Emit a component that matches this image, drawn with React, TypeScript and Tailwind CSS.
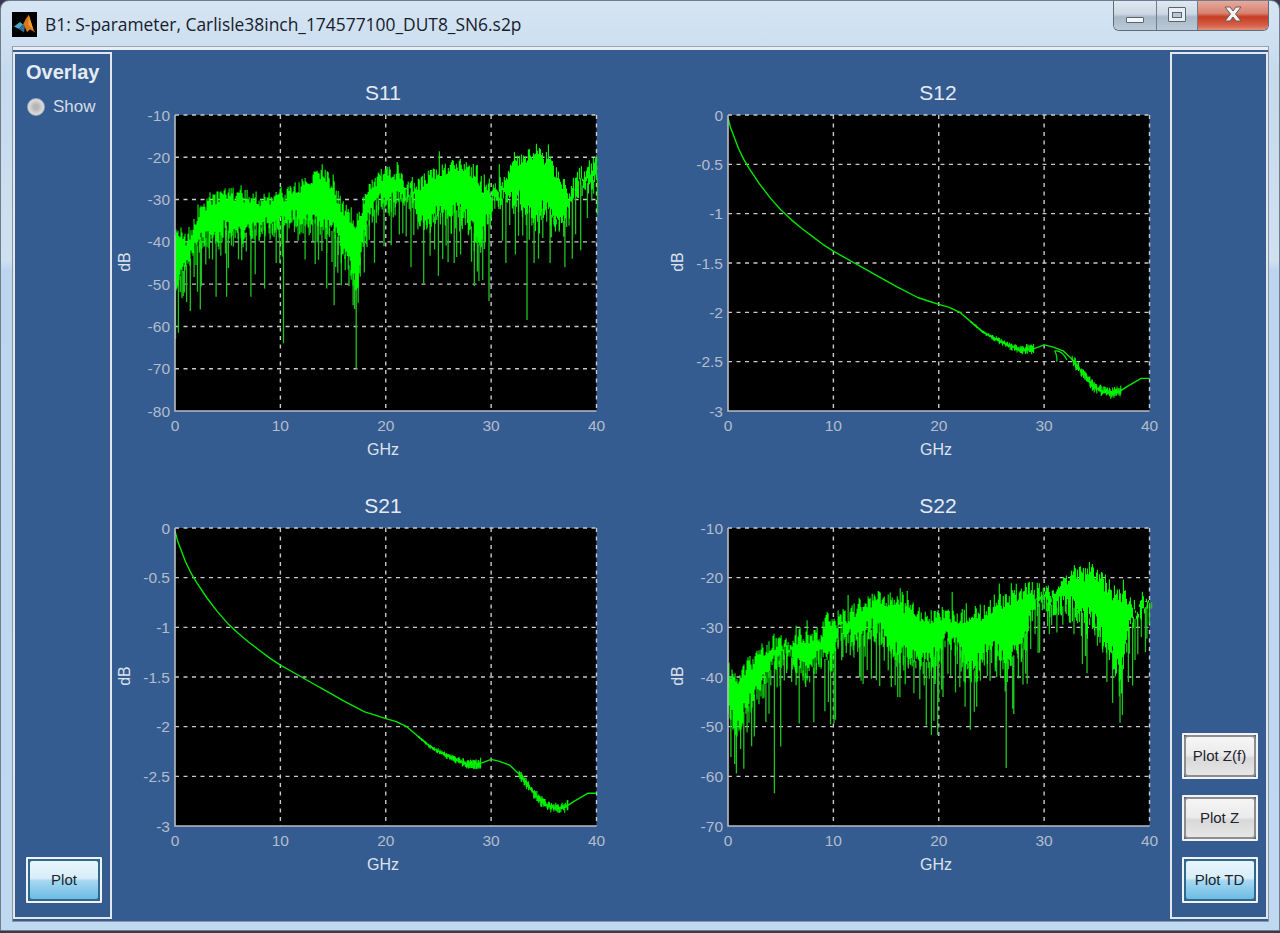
type Pt = [number, number];

// small seeded random so every render gives the same trace
const makeRand = (seed: number) => () => {
  seed = (seed + 0x6d2b79f5) | 0;
  let t = Math.imul(seed ^ (seed >>> 15), 1 | seed);
  t = (t + Math.imul(t ^ (t >>> 7), 61 | t)) ^ t;
  return ((t ^ (t >>> 14)) >>> 0) / 4294967296;
};

const interp = (pts: Pt[], x: number) => {
  for (let i = 1; i < pts.length; i++) {
    if (x <= pts[i][0]) {
      const [x0, y0] = pts[i - 1];
      const [x1, y1] = pts[i];
      return y0 + ((y1 - y0) * (x - x0)) / (x1 - x0);
    }
  }
  return pts[pts.length - 1][1];
};

const PLOT_W = 421.5;
const PLOT_LEFT = 53;
const PLOT_TOP = 40;

interface Noisy {
  top: Pt[];
  bottom: Pt[];
  spikes: Pt[];
  seed: number;
}

const s11: Noisy = {
  seed: 11,
  top: [[0, -38], [0.5, -37], [1, -39], [2, -35], [3, -30], [3.6, -29], [5, -28], [7, -29], [9, -29.5], [9.6, -27], [10.5, -28.5], [12, -26], [13.5, -23.2], [14.5, -24.5], [15.3, -28], [15.9, -31.5], [17.2, -35], [17.9, -30], [18.5, -27], [20, -22.8], [21.3, -23.7], [22.3, -27], [23, -26], [25.1, -22.8], [27, -21.2], [28.6, -23], [29.2, -26.4], [30.2, -27.7], [30.8, -26], [31.4, -25.5], [32.1, -20], [34.6, -18.8], [35.5, -20], [36.8, -26.4], [37.4, -28.3], [38.4, -23], [39.2, -23], [40, -19]],
  bottom: [[0, -50], [1, -46], [2.3, -40], [4.5, -37], [6.5, -38], [9, -36], [11.5, -34], [14, -35], [15.5, -39], [17.2, -50], [18, -37], [19.4, -30], [21, -30], [22.5, -29], [23.5, -36], [25.8, -32], [27.6, -33], [28.9, -41], [30.2, -29], [31.4, -30], [33, -30], [34, -34], [35, -32], [36.8, -36], [37.4, -30], [38.4, -27], [40, -25]],
  spikes: [[0.05, -63], [0.9, -52], [2.4, -56], [3.9, -53], [4.9, -53], [7.2, -53], [8.5, -51], [9.6, -45], [10.3, -64], [14.4, -51], [15.1, -55], [16.9, -55], [17.2, -70], [22.4, -46], [23.6, -50], [25, -48], [26.5, -45], [27.1, -43], [28.7, -47], [29.2, -49], [29.8, -54], [31.4, -45], [33.4, -58.5], [32.3, -43], [34.5, -44], [35.6, -45], [37, -46], [37.7, -44], [38.5, -42]],
};

const s22: Noisy = {
  seed: 22,
  top: [[0, -37.2], [0.6, -40], [2.4, -36], [4, -32.5], [5.6, -32.5], [7.1, -31], [8.7, -31], [9.4, -28], [10.3, -28.5], [11.9, -26], [13.5, -24], [15.1, -23.5], [16.7, -25], [18.2, -27], [20.8, -27.1], [23.9, -26.5], [25.8, -24.5], [28.3, -21.9], [29.9, -22.4], [31.2, -22.8], [32.4, -18.5], [34.9, -18.8], [36.8, -23], [38.1, -24], [38.7, -28], [39.7, -23], [40, -23]],
  bottom: [[0, -46], [0.8, -50], [1.5, -47], [2.7, -44], [3.9, -39], [5.6, -35], [7.7, -40], [8.7, -36], [10, -37], [10.6, -31], [12.5, -32], [14, -30], [15.9, -35], [18.1, -37], [19.2, -37], [20.8, -32], [22.3, -35], [23.3, -39], [24.9, -32.5], [26.4, -37], [28, -34], [28.6, -27], [29.9, -24.5], [31.2, -26], [32.4, -25.5], [34, -27.5], [35.2, -30], [36.1, -34], [37.3, -39], [38.1, -30], [38.7, -28], [40, -25]],
  spikes: [[0.8, -59.4], [1.3, -50], [2.5, -52], [4.4, -63.4], [5, -54], [10.2, -48.6], [12.5, -40], [15.5, -42], [16.1, -44], [18.2, -44.5], [19.3, -51.7], [19.9, -51.7], [20.4, -44], [22, -42], [22.5, -46], [23, -50.6], [23.6, -46], [25.5, -40], [26.4, -58.3], [28, -41.5], [35.3, -33], [36.5, -45.2], [37.2, -49.2], [38, -41]],
};

const buildNoisy = (n: Noisy, plotH: number, yMin: number, yMax: number) => {
  const rand = makeRand(n.seed);
  const px = (g: number) => (g / 40) * PLOT_W + PLOT_LEFT;
  const py = (d: number) => PLOT_TOP + ((yMax - d) / (yMax - yMin)) * plotH;
  let body = "";
  let thin = "";
  // one column per screen pixel, the reference trace is chunky and not a smooth band
  for (let g = 0; g <= 40; g += 0.095) {
    const t = interp(n.top, g) + (rand() - 0.65) * 3.6 + (rand() > 0.88 ? rand() * 3.5 : 0);
    const b = interp(n.bottom, g) + (rand() - 0.5) * 4.5 + (rand() > 0.7 ? -rand() * 4 : 0);
    body += `M${px(g).toFixed(1)} ${py(Math.min(t, yMax)).toFixed(1)}V${py(b).toFixed(1)}`;
  }
  for (let g = 0.1; g < 40; g += 0.3) {
    const gx = g + rand() * 0.25;
    const depth = Math.pow(rand(), 1.6) * 12 + 1;
    thin += `M${px(gx).toFixed(1)} ${py(interp(n.bottom, gx)).toFixed(1)}V${py(interp(n.bottom, gx) - depth).toFixed(1)}`;
  }
  n.spikes.forEach(([g, d]) => {
    thin += `M${px(g).toFixed(1)} ${py(interp(n.bottom, g) + 1).toFixed(1)}V${py(d).toFixed(1)}`;
  });
  return { body, thin };
};

const curve: Pt[] = [[0, -0.03], [0.25, -0.13], [0.5, -0.2], [1, -0.34], [1.5, -0.45], [2, -0.54], [3, -0.7], [4, -0.84], [5, -0.96], [6, -1.06], [7, -1.15], [8, -1.23], [9, -1.31], [10, -1.38], [11, -1.44], [12, -1.5], [13, -1.56], [14, -1.62], [16, -1.74], [18, -1.85], [19, -1.885], [20, -1.92], [21, -1.95], [22, -2], [24.2, -2.2], [26.1, -2.31], [27.7, -2.38], [29, -2.37], [30, -2.33], [30.8, -2.35], [31.8, -2.39], [32.6, -2.47], [33.4, -2.58], [34.7, -2.75], [35.5, -2.8], [36.3, -2.82], [37, -2.81], [37.9, -2.75], [39.2, -2.67], [40, -2.67]];

const buildCurve = (plotH: number, seed: number) => {
  const rand = makeRand(seed);
  const px = (g: number) => (g / 40) * PLOT_W + PLOT_LEFT;
  const py = (d: number) => PLOT_TOP + (-d / 3) * plotH;
  const line = "M" + curve.map(([g, d]) => `${px(g).toFixed(1)} ${py(d).toFixed(1)}`).join("L");
  let fuzz = "";
  for (let g = 23; g < 38; g += 0.06) {
    let w = 0;
    if (g < 29) w = ((g - 23) / 6) * 0.05 + 0.012;
    else if (g > 32.6 && g < 37.3) w = 0.06;
    if (w === 0) continue;
    const d = interp(curve, g);
    fuzz += `M${px(g).toFixed(1)} ${py(d + w * rand()).toFixed(1)}V${py(d - w * rand()).toFixed(1)}`;
  }
  return { line, fuzz };
};

interface ChartProps {
  title: string;
  titleX: number;
  yTicks: number[];
  plotH: number;
  children: React.ReactNode;
}

const Chart = ({ title, titleX, yTicks, plotH, children }: ChartProps) => {
  const yMax = yTicks[0];
  const yMin = yTicks[yTicks.length - 1];
  const right = PLOT_LEFT + PLOT_W;
  const bottom = PLOT_TOP + plotH;
  const yPos = (v: number) => PLOT_TOP + ((yMax - v) / (yMax - yMin)) * plotH;
  const xTicks = [0, 10, 20, 30, 40];
  const xPos = (v: number) => PLOT_LEFT + (v / 40) * PLOT_W;
  return (
    <svg width={495} height={413} className="block overflow-visible font-['Liberation_Sans',Arial,sans-serif]">
      <rect x={PLOT_LEFT} y={PLOT_TOP} width={PLOT_W} height={plotH} fill="#000" />
      <g stroke="#c9c9c9" strokeWidth={1.4} strokeDasharray="4 4.5" fill="none">
        {xTicks.slice(1).map((v) => (
          <line key={v} x1={xPos(v)} x2={xPos(v)} y1={PLOT_TOP} y2={bottom} />
        ))}
        {yTicks.slice(0, -1).map((v) => (
          <line key={v} x1={PLOT_LEFT} x2={right} y1={yPos(v)} y2={yPos(v)} />
        ))}
      </g>
      {children}
      <path d={`M${PLOT_LEFT} ${PLOT_TOP}V${bottom}H${right}`} stroke="#b9bcc2" strokeWidth={1.6} fill="none" />
      <g fill="#b3bccb" fontSize={15.5}>
        {xTicks.map((v) => (
          <text key={v} x={xPos(v)} y={bottom + 20} textAnchor="middle">{v}</text>
        ))}
        {yTicks.map((v) => (
          <text key={v} x={PLOT_LEFT - 5} y={yPos(v) + 5.5} textAnchor="end">{v}</text>
        ))}
      </g>
      <text x={titleX} y={PLOT_TOP - 15} textAnchor="middle" fontSize={21} fill="#e6ebf2">{title}</text>
      <text x={PLOT_LEFT + 208} y={bottom + 44} textAnchor="middle" fontSize={16} fill="#dde3ec">GHz</text>
      <text transform={`translate(8 ${PLOT_TOP + plotH / 2 - 1}) rotate(-90)`} textAnchor="middle" fontSize={16} fill="#dde3ec">dB</text>
    </svg>
  );
};

const NoisyTrace = ({ data }: { data: { body: string; thin: string } }) => (
  <g fill="none">
    <path d={data.thin} stroke="#1fc41f" strokeWidth={1.3} />
    <path d={data.body} stroke="#00ff00" strokeWidth={1.1} />
  </g>
);

const CurveTrace = ({ data, hook }: { data: { line: string; fuzz: string }; hook?: string }) => (
  <g fill="none" stroke="#00e800">
    <path d={data.line} strokeWidth={1.4} strokeLinejoin="round" />
    <path d={data.fuzz} stroke="#00f000" strokeWidth={1.1} />
    {hook && <path d={hook} strokeWidth={1.2} />}
  </g>
);

const PlotButton = ({ label, active }: { label: string; active?: boolean }) => (
  <div className="h-[46px] w-[76px] rounded-[1px] border-2 border-[#f1f3f6] font-['Liberation_Sans',Arial,sans-serif]">
    <div
      className={
        active
          ? "flex h-full w-full items-center justify-center rounded-[4px] border-2 border-[#2f6a8c] bg-[linear-gradient(#e9f5fc_0%,#d9eef9_45%,#a5d8f1_52%,#6dbce6_100%)] text-[15px] text-[#1b2430]"
          : "flex h-full w-full items-center justify-center rounded-[4px] border-2 border-[#8d8d8d] bg-[linear-gradient(#f5f5f5_0%,#ebebeb_48%,#d8d8d8_55%,#e6e6e6_100%)] text-[15px] text-[#1b2430]"
      }
    >
      {label}
    </div>
  </div>
);

const MatlabLogo = () => (
  <svg width={25} height={25} viewBox="0 0 25 25" className="shrink-0">
    <rect width={25} height={25} fill="#000" />
    <path d="M2 14.5 8 10l3 2.5L7 17z" fill="#4fa3c7" />
    <path d="M8 10l3 2.500 3-6 2.800-3.500L21.500 18l2 2.500-5.500-3-3 2.500-2.200-5L11 12.500z" fill="#d9761a" />
    <path d="M11 12.500 7 17l5 3.500 1-6.500z" fill="#2e6f96" />
    <path d="M16.800 3l4.700 15-5-5z" fill="#f0a030" />
  </svg>
);

const WindowButtons = () => (
  <div className="flex h-[30px] w-[156px] self-start overflow-hidden rounded-b-[6px] border border-t-0 border-[#5d6b7b]">
    <div className="flex w-[43px] items-end justify-center border-r border-[#6e7c8c] bg-[linear-gradient(#dfe8f0_0%,#ccd8e3_45%,#a9b8c7_55%,#bccad7_100%)] pb-[7px]">
      <div className="h-[6px] w-[18px] rounded-[1px] border border-[#5a6471] bg-[#f4f6f8]" />
    </div>
    <div className="flex w-[41px] items-center justify-center border-r border-[#6e7c8c] bg-[linear-gradient(#dfe8f0_0%,#ccd8e3_45%,#a9b8c7_55%,#bccad7_100%)] pb-[2px]">
      <div className="flex h-[15px] w-[18px] items-center justify-center rounded-[1px] border border-[#5a6471] bg-[#e9eef3]">
        <div className="h-[6px] w-[10px] border border-[#5a6471] bg-[#b9c7d4]" />
      </div>
    </div>
    <div className="flex flex-1 items-center justify-center bg-[linear-gradient(#e6a99c_0%,#d98272_42%,#c43c22_55%,#d8614a_85%,#e2907e_100%)] pb-[3px]">
      <svg width={22} height={18} viewBox="0 0 22 18">
        <path d="M3 2h5l3 4 3-4h5l-5.500 7L19 16h-5l-3-4-3 4H3l5.500-7z" fill="#f2f2f2" stroke="#6b5a58" strokeWidth={1} />
      </svg>
    </div>
  </div>
);

const s11Data = buildNoisy(s11, 296, -80, -10);
const s22Data = buildNoisy(s22, 298, -70, -10);
const s12Data = buildCurve(296, 12);
const s21Data = buildCurve(298, 21);
// little branch in the S12 trace at about 31 GHz
const hook = "M379.500 275.500C381.500 279 382.200 283 381.700 286.700M380 276C385 275.500 389 279 392 285";

export default function App() {
  return (
    <div className="h-[933px] w-[1280px] overflow-hidden bg-[#3c3a4a]">
      <div className="flex h-[931px] flex-col rounded-t-[9px] border border-[#6f7c8c] bg-[linear-gradient(#d6e5f3_0%,#c6daee_8%,#cfe0f0_28%,#bcd6f0_29%,#bfd9f1_100%)] pr-[10px] pb-[8px] pl-[11px]">
        <div className="flex h-[45px] shrink-0 items-start justify-between">
          <div className="flex items-center gap-[8px] pt-[11px]">
            <MatlabLogo />
            <span className="font-['Open_Sans',sans-serif] text-[17.4px] leading-[25px] text-[#16202c]">
              B1: S-parameter, Carlisle38inch_174577100_DUT8_SN6.s2p
            </span>
          </div>
          <WindowButtons />
        </div>
        <div className="flex min-h-0 flex-1 border border-[#8a96a3] border-t-[#99a4b0] bg-[#345c91] shadow-[inset_0_3px_0_#e9edf1]">
          <div className="mt-[5px] mb-[2px] flex w-[99px] flex-col justify-between border-2 border-[#e4e8ee] pt-[6px] pr-[4px] pb-[14px] pl-[11px] font-['Liberation_Sans',Arial,sans-serif]">
            <div>
              <div className="text-[20px] leading-[24px] font-bold whitespace-nowrap text-[#e6ebf2]">Overlay</div>
              <div className="mt-[13px] flex items-center gap-[8px] pl-[1px]">
                <div className="h-[18px] w-[18px] rounded-full border border-[#9aa7b8] bg-[radial-gradient(circle,#b5b5b5_20%,#dcdcdc_65%,#f2f2f2_100%)]" />
                <span className="text-[17px] leading-[20px] text-[#d5dce6]">Show</span>
              </div>
            </div>
            <PlotButton label="Plot" active />
          </div>
          <div className="grid flex-1 grid-cols-2 content-start gap-x-[58px] pt-[28px] pl-[10px]">
            <Chart title="S11" titleX={261} yTicks={[-10, -20, -30, -40, -50, -60, -70, -80]} plotH={296}>
              <NoisyTrace data={s11Data} />
            </Chart>
            <Chart title="S12" titleX={263} yTicks={[0, -0.5, -1, -1.5, -2, -2.5, -3]} plotH={296}>
              <CurveTrace data={s12Data} hook={hook} />
            </Chart>
            <Chart title="S21" titleX={261} yTicks={[0, -0.5, -1, -1.5, -2, -2.5, -3]} plotH={298}>
              <CurveTrace data={s21Data} />
            </Chart>
            <Chart title="S22" titleX={263} yTicks={[-10, -20, -30, -40, -50, -60, -70]} plotH={298}>
              <NoisyTrace data={s22Data} />
            </Chart>
          </div>
          <div className="mt-[5px] mb-[2px] flex w-[98px] flex-col items-center justify-end gap-[16px] border-2 border-[#e4e8ee] pb-[14px] pl-[1px]">
            <PlotButton label="Plot Z(f)" />
            <PlotButton label="Plot Z" />
            <PlotButton label="Plot TD" active />
          </div>
        </div>
      </div>
    </div>
  );
}
